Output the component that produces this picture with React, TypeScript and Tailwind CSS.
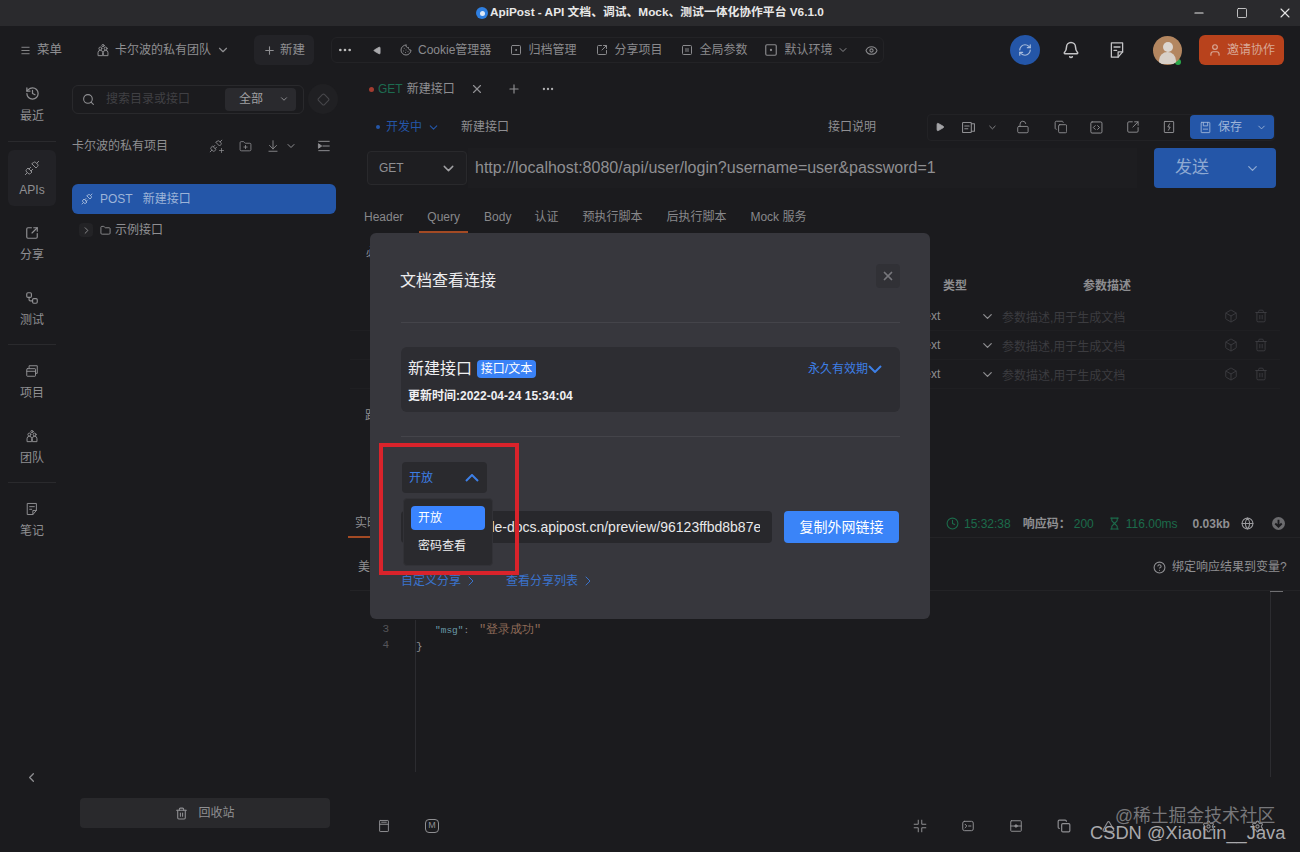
import React from "react";
import { ChevronDown, ChevronLeft, ChevronRight, Search, X, Plus, Play, LockOpen, Copy, Eye, Bell, RefreshCw, User, Trash2, Box, Clock, Hourglass, Globe, CircleHelp, ArrowDownToLine, Folder, Minus, Square, History, Workflow, Cookie, SquareDot, SquarePause, SquareCode, SquareArrowOutUpRight, Ellipsis, Diamond, FolderPlus, Menu, Unplug, Settings, Triangle } from "lucide-react";

const Ico = ({ size = 14, children, className = "" }: { size?: number; children: React.ReactNode; className?: string }) => (
  <svg width={size} height={size} viewBox="0 0 24 24" fill="none" stroke="currentColor" strokeWidth="1.7" strokeLinejoin="round" strokeLinecap="round" className={`shrink-0 ${className}`}>
    {children}
  </svg>
);

const Team = ({ size = 14, className = "" }: { size?: number; className?: string }) => (
  <Ico size={size} className={className}>
    <circle cx="12" cy="4.5" r="2" />
    <circle cx="7.5" cy="9.5" r="2.5" />
    <circle cx="16.5" cy="9.5" r="2.5" />
    <path d="M3.5 21v-4.5a4 4 0 0 1 8 0V21z" />
    <path d="M12.5 21v-4.5a4 4 0 0 1 8 0V21z" />
  </Ico>
);
const Note = ({ size = 14, className = "" }: { size?: number; className?: string }) => (
  <Ico size={size} className={className}>
    <path d="M4.5 2.5h15v12l-6 7h-9z" />
    <path d="M13.5 21.5v-7h6M8 8h8M8 12.5h3.5" />
  </Ico>
);
const Stack = ({ size = 14 }: { size?: number }) => (
  <Ico size={size}>
    <rect x="3" y="8" width="15" height="13" rx="1" />
    <path d="M7 8V3h14v13h-3M3 12.5h15" />
  </Ico>
);
const PanelDoc = ({ size = 14 }: { size?: number }) => (
  <Ico size={size}>
    <rect x="2.5" y="4" width="14" height="16" rx="1" />
    <path d="M16.5 6h5v12h-5M6 9.5h7M6 14h5" />
  </Ico>
);
const SaveBox = ({ size = 14 }: { size?: number }) => (
  <Ico size={size}>
    <rect x="4" y="2.5" width="16" height="19" rx="1" />
    <path d="M8 2.5V9h8V2.5M8 15h8" />
  </Ico>
);
const BoltBox = ({ size = 14 }: { size?: number }) => (
  <Ico size={size}>
    <rect x="4" y="2.5" width="16" height="19" rx="1" />
    <path d="M13 6.5l-3 5.5h4l-3 5.5" />
  </Ico>
);
const Compress = ({ size = 14 }: { size?: number }) => (
  <Ico size={size}>
    <path d="M9 2v7H2M15 2v7h7M9 22v-7H2M15 22v-7h7" />
  </Ico>
);
const TermBox = ({ size = 14 }: { size?: number }) => (
  <Ico size={size}>
    <rect x="3" y="4" width="18" height="16" rx="3" />
    <path d="M7 9l3 3-3 3M13 12h4" />
  </Ico>
);
const DotBox = ({ size = 14 }: { size?: number }) => (
  <Ico size={size}>
    <rect x="3" y="3" width="18" height="18" rx="1" />
    <path d="M3 12h18" />
    <circle cx="12" cy="12" r="2" fill="currentColor" />
  </Ico>
);
const PageBox = ({ size = 14 }: { size?: number }) => (
  <Ico size={size}>
    <rect x="4.5" y="2.5" width="15" height="19" rx="1" />
    <path d="M4.5 9h15M8 5.5h8" />
  </Ico>
);
const Outdent = ({ size = 14 }: { size?: number }) => (
  <Ico size={size}>
    <path d="M3 4h18M10 12h11M3 20h18" />
    <path d="M3 8.5l5 3.5-5 3.5z" fill="currentColor" />
  </Ico>
);
const DownDisc = () => (
  <svg width="13" height="13" viewBox="0 0 24 24" className="ml-[18px] shrink-0">
    <circle cx="12" cy="12" r="12" fill="#6b6b6e" />
    <path d="M12 5v13M6 12l6 6 6-6" fill="none" stroke="#1b1b1e" strokeWidth="3.5" />
  </svg>
);
const Chev = ({ up, className = "" }: { up?: boolean; className?: string }) => (
  <svg width="14" height="8" viewBox="0 0 14 8" fill="none" stroke="currentColor" strokeWidth="2" className={`shrink-0 ${className}`}>
    <path d={up ? "M1 7l6-6 6 6" : "M1 1l6 6 6-6"} />
  </svg>
);

const NavItem = ({ icon, label, active, mb }: { icon: React.ReactNode; label: string; active?: boolean; mb: string }) => (
  <div className={`flex h-[56px] w-[48px] flex-col items-center justify-center gap-[5px] rounded-md text-[12px] text-[#8f8f92] ${active ? "bg-[#222226]" : ""} ${mb}`}>
    <span className="flex h-[18px] items-center">{icon}</span>
    <span className="leading-[16px]">{label}</span>
  </div>
);

const TopTool = ({ icon, label, ml }: { icon: React.ReactNode; label: string; ml: string }) => (
  <div className={`flex items-center gap-[6px] ${ml}`}>
    {icon}
    <span>{label}</span>
  </div>
);

const ParamRow = () => (
  <div className="mr-[20px] flex h-[29px] items-center border-b border-[#1f1f22]">
    <span className="ml-[571px] w-[21px] text-[12px] text-[#8d8d90]">text</span>
    <ChevronDown size={15} className="ml-[38px] text-[#8d8d90]" />
    <span className="ml-[7px] mt-[3px] w-[210px] text-[12px] text-[#3c3c40]">参数描述,用于生成文档</span>
    <Box size={14} strokeWidth={1.5} className="ml-[12px] text-[#3e3e42]" />
    <Trash2 size={14} strokeWidth={1.5} className="ml-[16px] text-[#3e3e42]" />
  </div>
);

export default function App() {
  return (
    <div className="relative flex h-[852px] w-[1300px] flex-col overflow-hidden bg-[#1b1b1e] [font-family:'Liberation_Sans','Noto_Sans_CJK_SC',sans-serif]">
      {/* title bar */}
      <div className="flex h-[26px] items-center bg-[#2a2a2d] text-[11.8px] font-bold text-[#e8e8e8]">
        <div className="ml-[476px] flex w-[690px] items-center gap-[2px]">
          <span className="flex h-[12px] w-[12px] items-center justify-center rounded-full bg-[#2f7fe0]"><span className="h-[5px] w-[5px] rounded-full bg-[#dfe9f7]" /></span>
          <span>ApiPost - API 文档、调试、Mock、测试一体化协作平台 V6.1.0</span>
        </div>
        <Minus size={14} className="ml-[26px] text-[#e5e5e5]" />
        <Square size={12} strokeWidth={1.6} className="ml-[30px] text-[#e5e5e5]" />
        <X size={16} strokeWidth={1.6} className="ml-[29px] text-[#e5e5e5]" />
      </div>

      {/* toolbar */}
      <div className="flex h-[48px] items-center text-[12px] text-[#8f8f92]">
        <Menu size={11} className="ml-[20px]" />
        <span className="ml-[6px] text-[12.5px]">菜单</span>
        <Team size={14} className="ml-[34px]" />
        <span className="ml-[5px] w-[96px]">卡尔波的私有团队</span>
        <ChevronDown size={14} className="ml-[5px]" />
        <div className="ml-[24px] flex h-[30px] w-[60px] items-center justify-center gap-[4px] rounded-md bg-[#232327] text-[12.5px]">
          <Plus size={13} /><span>新建</span>
        </div>
        <div className="ml-[17px] flex h-[26px] w-[553px] items-center rounded-md border border-[#232326] text-[#8a8a8d]">
          <Ellipsis size={16} className="ml-[5px] text-[#bcbcbc]" />
          <Play size={9} className="ml-[20px] rotate-180 fill-[#a9a9ac] text-[#a9a9ac]" />
          <TopTool ml="ml-[18px]" icon={<Cookie size={12} />} label="Cookie管理器" />
          <TopTool ml="ml-[19px]" icon={<SquareDot size={12} />} label="归档管理" />
          <TopTool ml="ml-[20px]" icon={<SquareArrowOutUpRight size={12} />} label="分享项目" />
          <TopTool ml="ml-[19px]" icon={<SquarePause size={12} />} label="全局参数" />
          <TopTool ml="ml-[17px]" icon={<SquareDot size={14} />} label="默认环境" />
          <ChevronDown size={12} className="ml-[5px]" />
          <Eye size={13} className="ml-[16px]" />
        </div>
        <div className="ml-[126px] flex h-[30px] w-[30px] items-center justify-center rounded-full bg-[#2456a8]">
          <RefreshCw size={14} className="text-[#a7bcdc]" />
        </div>
        <Bell size={18} className="ml-[22px] text-[#c4c4c6]" />
        <Note size={18} className="ml-[28px] text-[#c4c4c6]" />
        <div className="relative ml-[27px] flex h-[29px] w-[29px] items-end justify-center overflow-hidden rounded-full bg-[#b38660]">
          <span className="mb-[1px] h-[12px] w-[17px] rounded-t-full bg-[#d8d0c8]" />
          <span className="absolute top-[6px] h-[10px] w-[10px] rounded-full bg-[#dcd6d0]" />
        </div>
        <span className="ml-[-7px] mt-[24px] h-[6px] w-[6px] rounded-full bg-[#2aa84a]" />
        <div className="ml-[18px] flex h-[30px] w-[85px] items-center justify-center gap-[5px] rounded-md bg-[#b8421c] text-[#d8a896]">
          <User size={14} /><span>邀请协作</span>
        </div>
      </div>

      {/* body */}
      <div className="flex flex-1">
        {/* nav */}
        <div className="flex w-[64px] flex-col pl-[8px] pt-[2px]">
          <NavItem mb="mb-[9px]" icon={<History size={15} />} label="最近" />
          <div className="mb-[8px] h-px w-[48px] bg-[#2a2a2d]" />
          <NavItem mb="mb-[9px]" active icon={<Unplug size={16} strokeWidth={1.5} />} label="APIs" />
          <NavItem mb="mb-[9px]" icon={<SquareArrowOutUpRight size={14} />} label="分享" />
          <NavItem mb="mb-[8px]" icon={<Workflow size={14} />} label="测试" />
          <div className="mb-[8px] h-px w-[48px] bg-[#2a2a2d]" />
          <NavItem mb="mb-[9px]" icon={<Stack size={14} />} label="项目" />
          <NavItem mb="mb-[8px]" icon={<Team size={14} />} label="团队" />
          <div className="mb-[8px] h-px w-[48px] bg-[#2a2a2d]" />
          <NavItem mb="mb-0" icon={<Note size={14} />} label="笔记" />
          <ChevronLeft size={15} className="ml-[16px] mt-[223px] text-[#8f8f92]" />
        </div>

        {/* sidebar */}
        <div className="flex w-[286px] flex-col pl-[8px] pt-[10px] text-[12px] text-[#8f8f92]">
          <div className="flex items-center">
            <div className="flex h-[29px] w-[232px] items-center rounded-md border border-[#29292c]">
              <Search size={13} className="ml-[9px]" />
              <span className="ml-[11px] w-[119px] text-[#404044]">搜索目录或接口</span>
              <div className="flex h-[23px] w-[71px] items-center rounded bg-[#2a2a2e] pl-[14px] text-[#a0a0a3]">
                全部<ChevronDown size={10} className="ml-[16px]" />
              </div>
            </div>
            <div className="ml-[4px] flex h-[30px] w-[30px] items-center justify-center rounded-full bg-[#202023]">
              <Diamond size={13} className="text-[#47474b]" />
            </div>
          </div>
          <div className="mt-[22px] flex h-[20px] items-center">
            <span className="w-[135px]">卡尔波的私有项目</span>
            <span className="relative ml-[2px] flex">
              <Unplug size={14} strokeWidth={1.5} />
              <Plus size={7} strokeWidth={2.5} className="absolute -right-[2px] bottom-[-1px]" />
            </span>
            <FolderPlus size={13} strokeWidth={1.5} className="ml-[16px]" />
            <ArrowDownToLine size={14} strokeWidth={1.5} className="ml-[14px]" />
            <ChevronDown size={12} className="ml-[5px]" />
            <span className="ml-[20px] flex"><Outdent size={14} /></span>
          </div>
          <div className="mt-[28px] flex h-[30px] w-[264px] items-center rounded-md bg-[#2456a8] text-[#9db4d8]">
            <Unplug size={12} className="ml-[9px]" />
            <span className="ml-[7px]">POST</span>
            <span className="ml-[10px]">新建接口</span>
          </div>
          <div className="mt-[6px] flex h-[20px] items-center">
            <span className="ml-[7px] flex h-[14px] w-[14px] items-center justify-center rounded-sm bg-[#232326]"><ChevronRight size={11} /></span>
            <Folder size={11} className="ml-[7px]" />
            <span className="ml-[4px]">示例接口</span>
          </div>
          <div className="ml-[8px] mt-[558px] flex h-[30px] w-[250px] items-center justify-center gap-[10px] rounded bg-[#29292c] text-[#8f8f92]">
            <Trash2 size={13} /><span>回收站</span>
          </div>
        </div>

        {/* main */}
        <div className="flex w-[950px] flex-col text-[12px] text-[#8f8f92]">
          <div className="mt-[5px] flex h-[20px] items-center">
            <span className="ml-[19px] h-[5px] w-[5px] rounded-full bg-[#a33c30]" />
            <span className="ml-[4px] text-[#1d6b50]">GET</span>
            <span className="ml-[4px]">新建接口</span>
            <X size={14} className="ml-[15px]" />
            <Plus size={14} className="ml-[23px]" />
            <Ellipsis size={14} className="ml-[20px] text-[#b0b0b2]" />
          </div>
          <div className="mt-[14px] flex h-[28px] items-center">
            <span className="ml-[26px] h-[4px] w-[4px] rounded-full bg-[#2456a8]" />
            <span className="ml-[6px] text-[#2456a8]">开发中</span>
            <ChevronDown size={13} className="ml-[5px] text-[#2456a8]" />
            <span className="ml-[21px]">新建接口</span>
            <span className="ml-[319px]">接口说明</span>
            <div className="ml-[51px] flex h-[27px] w-[348px] items-center rounded border border-[#222225]">
              <Play size={10} className="ml-[7px] fill-[#a4a4a7] text-[#a4a4a7]" />
              <span className="ml-[16px] flex"><PanelDoc size={15} /></span>
              <ChevronDown size={11} className="ml-[11px]" />
              <LockOpen size={14} strokeWidth={1.6} className="ml-[18px]" />
              <Copy size={14} strokeWidth={1.6} className="ml-[24px]" />
              <SquareCode size={15} strokeWidth={1.6} className="ml-[22px]" />
              <SquareArrowOutUpRight size={14} strokeWidth={1.6} className="ml-[22px]" />
              <span className="ml-[22px] flex"><BoltBox size={14} /></span>
              <div className="ml-[14px] flex h-[24px] w-[85px] items-center rounded bg-[#2456a8] text-[#9db4d8]">
                <span className="ml-[9px] flex"><SaveBox size={13} /></span>
                <span className="ml-[6px]">保存</span>
                <ChevronDown size={11} className="ml-[14px]" />
              </div>
            </div>
          </div>
          <div className="mt-[7px] flex h-[40px] items-center">
            <div className="ml-[17px] flex h-[34px] w-[100px] items-center rounded border border-[#29292c] bg-[#1e1e21] pl-[11px]">
              GET<ChevronDown size={17} className="ml-[36px] text-[#a0a0a3]" />
            </div>
            <div className="ml-[1px] flex h-[40px] w-[669px] items-center bg-[#1d1d20] pl-[7px] text-[16px] text-[#8f8f92]">
              http://localhost:8080/api/user/login?username=user&amp;password=1
            </div>
            <div className="ml-[17px] flex h-[40px] w-[122px] items-center rounded bg-[#2456a8] text-[#8ea9d2]">
              <span className="ml-[21px] text-[17px]">发送</span>
              <ChevronDown size={15} className="ml-[36px]" />
            </div>
          </div>
          <div className="mt-[20px] flex h-[24px] items-start text-[12px] text-[#88888b]">
            <span className="ml-[14px]">Header</span>
            <span className="ml-[16px] border-b-2 border-[#a34a24] px-[8px] pb-[5px]">Query</span>
            <span className="ml-[16px]">Body</span>
            <span className="ml-[23px]">认证</span>
            <span className="ml-[24px]">预执行脚本</span>
            <span className="ml-[24px]">后执行脚本</span>
            <span className="ml-[24px]">Mock 服务</span>
          </div>
          {/* params */}
          <div className="mt-[12px] flex h-[18px] items-center">
            <span className="ml-[16px]">必填</span>
          </div>
          <div className="mt-[15px] flex h-[18px] items-center">
            <span className="ml-[593px] font-bold text-[#8d8d90]">类型</span>
            <span className="ml-[116px] font-bold text-[#8d8d90]">参数描述</span>
          </div>
          <div className="mt-[7px] flex flex-col">
            <ParamRow /><ParamRow /><ParamRow />
          </div>
          <div className="ml-[15px] mt-[18px] h-[18px] leading-[18px]">路径</div>
          {/* response */}
          <div className="mt-[85px] flex h-[28px] items-center border-b border-[#232326] text-[12px]">
            <span className="ml-[-2px] w-[22px] whitespace-nowrap border-b-2 border-[#a34a24] pl-[7px] leading-[26px] text-[#8f8f92]">实时响应</span>
            <Clock size={13} className="ml-[576px] text-[#1c6b4b]" />
            <span className="ml-[5px] text-[#1c6b4b]">15:32:38</span>
            <span className="ml-[12px] font-bold text-[#8f8f92]">响应码：</span>
            <span className="ml-[3px] text-[#1c6b4b]">200</span>
            <Hourglass size={13} className="ml-[14px] text-[#1c6b4b]" />
            <span className="ml-[5px] text-[#1c6b4b]">116.00ms</span>
            <span className="ml-[15px] font-bold text-[#8f8f92]">0.03kb</span>
            <Globe size={13} className="ml-[11px] text-[#9a9a9d]" />
            <DownDisc />
          </div>
          <div className="mt-[18px] flex h-[22px] items-center">
            <span className="ml-[8px] w-[24px]">美化</span>
            <CircleHelp size={13} className="ml-[771px]" />
            <span className="ml-[6px]">绑定响应结果到变量?</span>
          </div>
          <div className="mt-[12px] flex h-[187px] border-t border-[#232326]">
            <div className="mt-[30px] flex h-[155px] w-[65px] flex-col items-end pr-[26px] font-['Liberation_Mono'] text-[11px] leading-[16px] text-[#55555a]">
              <span>3</span><span>4</span>
            </div>
            <div className="mt-[29px] h-[152px] w-[1px] bg-[#2c2c30]" />
            <div className="mt-[31px] flex h-[154px] w-[854px] flex-col font-['Liberation_Mono'] text-[9.5px] leading-[16px]">
              <div className="pl-[19px]"><span className="text-[#6a9aa8]">"msg"</span><span className="text-[#8f8f92]">: </span><span className="ml-[4px] text-[12px] text-[#8e6a58]">"登录成功"</span></div>
              <div className="text-[11px] text-[#8f8f92]">{"}"}</div>
            </div>
            <div className="flex h-[186px] flex-col">
              <div className="h-[1px] w-[13px] bg-[#6f6f72]" />
              <div className="h-[185px] w-px bg-[#2c2c30]" />
            </div>
          </div>
          <div className="mt-[39px] flex h-[20px] items-center">
            <span className="ml-[27px] flex"><PageBox size={14} /></span>
            <span className="ml-[34px] flex h-[14px] w-[14px] items-center justify-center rounded-sm border border-[#8f8f92] text-[9px]">M</span>
            <span className="ml-[474px] flex"><Compress size={14} /></span>
            <span className="ml-[34px] flex"><TermBox size={14} /></span>
            <span className="ml-[34px] flex"><DotBox size={14} /></span>
            <Copy size={14} className="ml-[34px]" />
            <Triangle size={13} className="ml-[31px]" />
            <Settings size={13} className="ml-[87px]" />
            <Settings size={13} className="ml-[36px]" />
          </div>
        </div>
      </div>

      {/* watermark */}
      <span className="absolute left-[1115px] top-[803px] text-[17.8px] text-[#77777a]">@稀土掘金技术社区</span>
      <span className="absolute left-[1090px] top-[819px] text-[18.3px] text-[#a9a9ac]">CSDN @XiaoLin__Java</span>

      {/* modal */}
      <div className="absolute left-[370px] top-[233px] flex h-[386px] w-[560px] flex-col rounded-md bg-[#37373d] px-[31px] text-[12px] text-[#e8e8ea]">
        <div className="flex h-[89px] items-start justify-between">
          <span className="ml-[-1px] mt-[38px] text-[16px] leading-[20px] text-[#ececee]">文档查看连接</span>
          <span className="mr-[-1px] mt-[31px] flex h-[24px] w-[24px] items-center justify-center rounded bg-[#313136]"><X size={14} strokeWidth={3} className="text-[#77777c]" /></span>
        </div>
        <div className="h-px w-[499px] bg-[#44444a]" />
        <div className="mt-[24px] flex h-[65px] w-[499px] flex-col rounded-md bg-[#2d2d32] pl-[7px]">
          <div className="mt-[13px] flex h-[18px] items-center">
            <span className="text-[16px] text-[#f0f0f2]">新建接口</span>
            <span className="ml-[5px] flex h-[18px] w-[59px] items-center justify-center rounded bg-[#3a82f6] text-[12px] text-white">接口/文本</span>
            <span className="ml-[272px] text-[#3d7fe6]">永久有效期</span>
            <Chev className="text-[#3d7fe6]" />
          </div>
          <span className="mt-[10px] font-bold leading-[16px] text-[#f0f0f2]">更新时间:2022-04-24 15:34:04</span>
        </div>
        <div className="mt-[24px] h-px w-[499px] bg-[#44444a]" />
        <div className="ml-[1px] mt-[25px] flex h-[31px] w-[85px] items-center rounded bg-[#2a2a2e] pl-[7px] pt-[1px] text-[#3d7fe6]">
          开放<Chev up className="ml-[32px]" />
        </div>
        <div className="mt-[18px] flex h-[32px] items-center">
          <div className="flex h-[32px] w-[371px] items-center rounded bg-[#28282c] pl-[11px] pr-[12px] text-[14px] text-[#e8e8ea]">
            <span className="overflow-hidden whitespace-nowrap">https://console-docs.apipost.cn/preview/96123ffbd8b87e7d</span>
          </div>
          <div className="ml-[12px] flex h-[32px] w-[115px] items-center justify-center rounded bg-[#3a84f8] text-[14px] text-white">复制外网链接</div>
        </div>
        <div className="mt-[29px] flex h-[18px] items-center text-[#3a73cc]">
          <span>自定义分享</span>
          <ChevronRight size={16} strokeWidth={1.5} className="ml-[2px]" />
          <span className="ml-[27px]">查看分享列表</span>
          <ChevronRight size={16} strokeWidth={1.5} className="ml-[2px]" />
        </div>
      </div>

      {/* dropdown */}
      <div className="absolute left-[403px] top-[498px] flex h-[68px] w-[90px] flex-col rounded border border-[#323237] bg-[#2a2a2e] px-[7px] pt-[7px] text-[12px] text-[#eeeeee]">
        <div className="flex h-[24px] items-center rounded-sm bg-[#3a84ff] pl-[7px] text-white">开放</div>
        <div className="mt-[6px] flex h-[20px] items-center pl-[7px]">密码查看</div>
      </div>

      {/* red annotation */}
      <div className="absolute left-[379px] top-[443px] h-[132px] w-[140px] border-[4px] border-[#d9232b]" />
    </div>
  );
}
